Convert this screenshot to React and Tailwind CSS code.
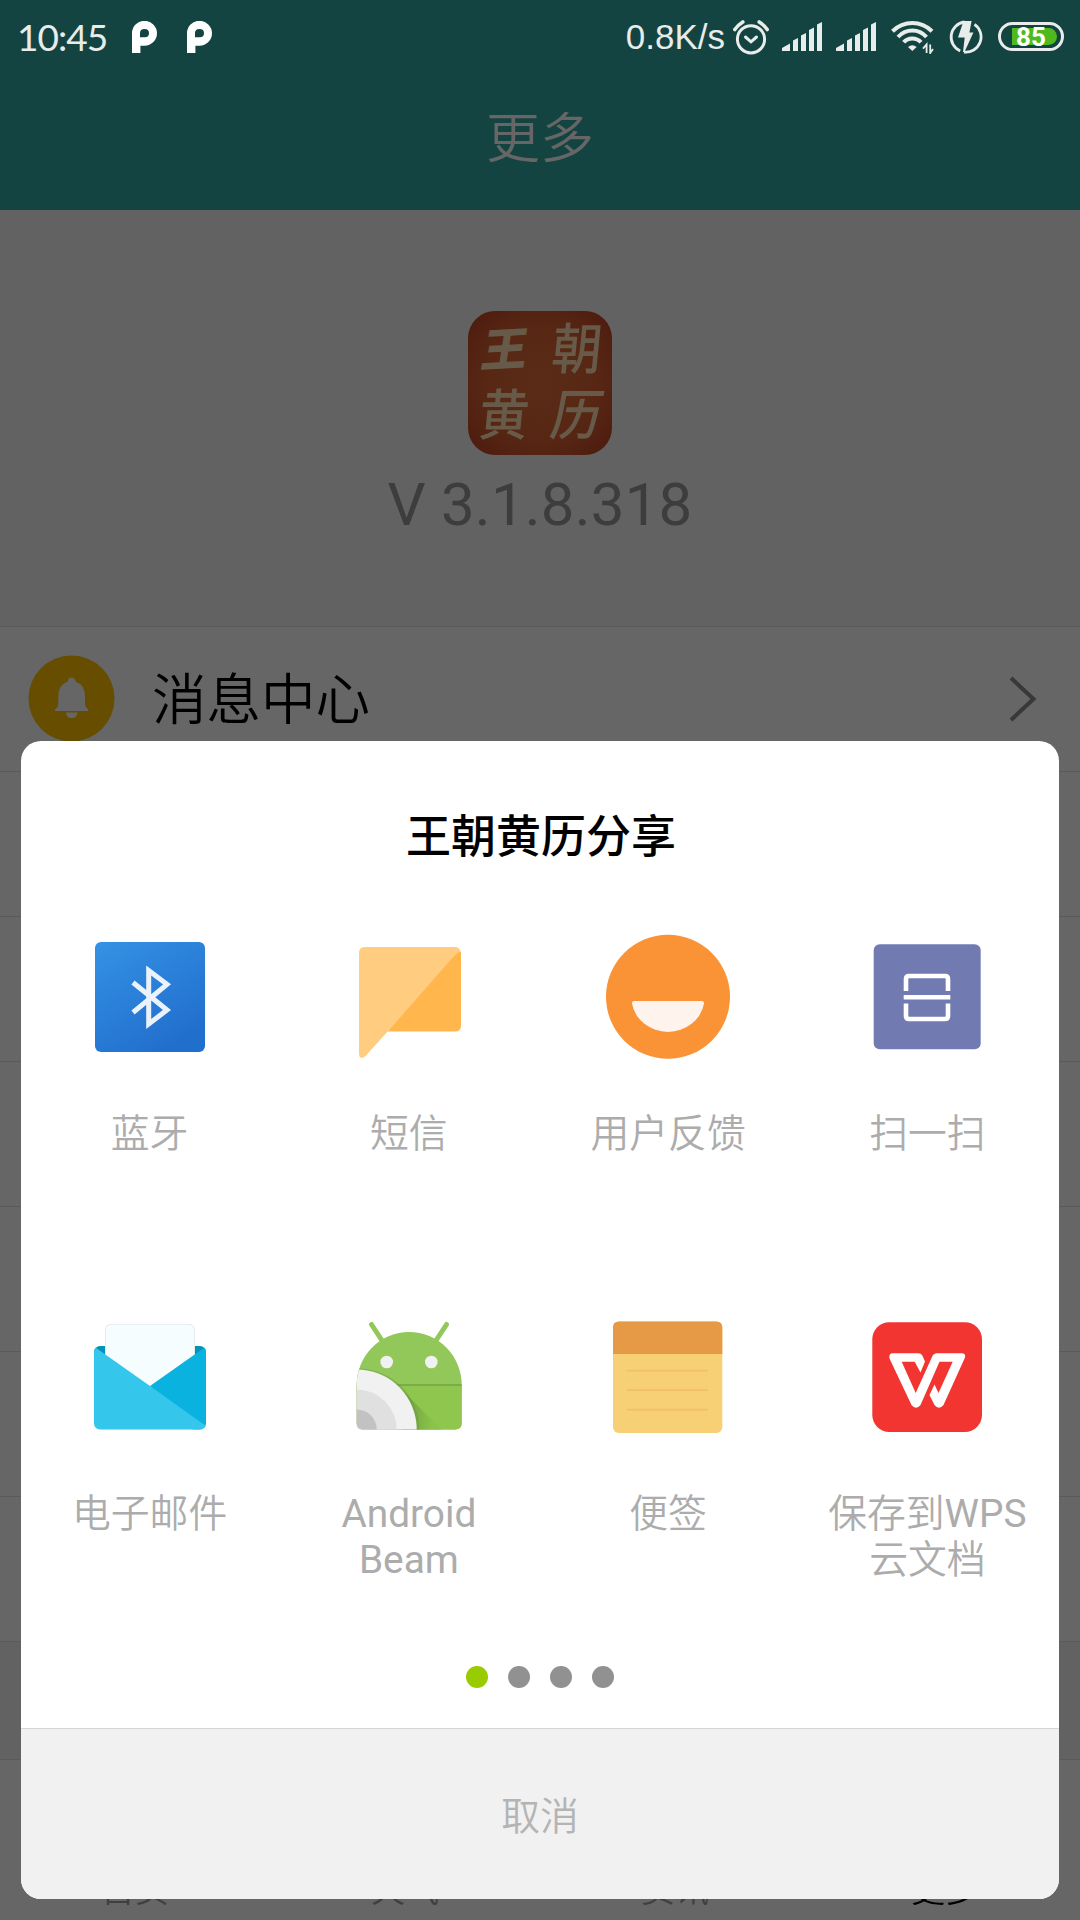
import React from "react";

function PinIcon() {
  return (
    <svg className="h-8 w-[25px]" viewBox="0 0 25 32" fill="#fff">
      <path
        fillRule="evenodd"
        d="M0 32V12.5A12.5 12.5 0 1 1 12.5 24.8H8.4V32ZM8 16.2V12Q8 8 12.5 8T17 12.2T12.5 16.2Z"
      />
    </svg>
  );
}

function AlarmIcon() {
  return (
    <svg className="h-9 w-9" viewBox="0 0 36 36" fill="none" stroke="#e8eceb" strokeWidth="3">
      <circle cx="18" cy="20.3" r="13.6" />
      <path d="M12.5 18l5.5 4.8 5.5-4.8" strokeLinecap="round" />
      <path d="M1.8 10.5Q5 6 9.8 3M34.2 10.5Q31 6 26.2 3" strokeWidth="3.6" strokeLinecap="round" />
    </svg>
  );
}

function SignalIcon() {
  return (
    <svg className="h-[29px] w-10" viewBox="0 0 40 29" fill="#e8eceb">
      <path d="M0 29V26L8 21.5V29ZM11 29V18.5L16 16V29ZM19 29V13.5L24 11V29ZM27 29V8L32 5.5V29ZM35 29V2.5L40 0V29Z" />
    </svg>
  );
}

function WifiIcon() {
  return (
    <svg className="h-[34px] w-[43px]" viewBox="0 0 43 34" fill="none" stroke="#e8eceb" strokeWidth="4">
      <path d="M1.5 11.2Q10 3 21.3 3T41 11.2" />
      <path d="M7 17Q13 10.6 21.3 10.6T35.5 17" />
      <path d="M12.7 22.3Q16 18.4 21.3 18.4T30 22.3" />
      <path d="M17 27Q21.3 23.5 25.7 27L21.3 31Z" fill="#e8eceb" stroke="none" />
      <path d="M35.6 33V24.5L32 28.6M39.2 24.5V33L42 29" strokeWidth="1.8" />
    </svg>
  );
}

function ChargeIcon() {
  return (
    <svg className="h-[34px] w-[34px]" viewBox="0 0 34 34" fill="none" stroke="#e8eceb" strokeWidth="2.8">
      <path d="M15.5 2A15.2 15.2 0 0 0 11.2 31" />
      <path d="M25.5 4.4A15.2 15.2 0 0 1 15 32" />
      <path d="M14.5 1H22.6L20.4 12.4H24.4L15.5 32H14L15.7 17.5H9Z" fill="#e8eceb" stroke="none" />
    </svg>
  );
}

function Battery() {
  return (
    <div className="flex h-[29px] w-[66px] items-center rounded-full border-[3px] border-[#e8eceb] pl-[11px]">
      <div className="flex h-[17px] w-[45px] items-center justify-center rounded-r-full bg-[#4fba1d] pr-[7px] font-['Roboto',sans-serif] text-[26px] leading-none font-bold text-white">
        85
      </div>
    </div>
  );
}

function StatusBar() {
  return (
    <div className="flex h-[73px] items-center justify-between pr-[16px] pl-[17px]">
      <div className="flex items-center">
        <span className="w-[115px] font-['Lato',sans-serif] text-[37px] leading-none tracking-[-1px] text-[#e8eceb]">10:45</span>
        <div className="flex gap-[30px]">
          <PinIcon />
          <PinIcon />
        </div>
      </div>
      <div className="flex items-center">
        <span className="mr-[8px] font-['Liberation_Sans',sans-serif] text-[35px] leading-none text-[#e8eceb]">0.8K/s</span>
        <AlarmIcon />
        <div className="mr-[15px] ml-[13px] flex gap-[14px]">
          <SignalIcon />
          <SignalIcon />
        </div>
        <WifiIcon />
        <div className="mr-[15px] ml-[15px]">
          <ChargeIcon />
        </div>
        <Battery />
      </div>
    </div>
  );
}

function AppLogo() {
  return (
    <div className="grid h-36 w-36 grid-cols-2 grid-rows-2 place-items-center rounded-[27px] bg-[radial-gradient(circle,#5a2c17_0%,#572714_55%,#4d1a0e_100%)] p-[6px] text-[50px] leading-none text-[#685a49]">
      <span className="-rotate-3 -skew-x-12 pr-[4px] text-[46px] font-black">王</span>
      <span className="-skew-x-6 scale-y-110 pl-[8px] font-medium">朝</span>
      <span className="-skew-x-6 scale-y-110 pr-[6px] font-medium">黄</span>
      <span className="-skew-x-12 scale-y-110 pl-[8px] font-medium">历</span>
    </div>
  );
}

function BellBadge() {
  return (
    <svg className="h-[87px] w-[87px]" viewBox="0 0 87 87">
      <circle cx="43.5" cy="43.5" r="43" fill="#664d00" />
      <path
        fill="#666"
        d="M43.5 22.5Q47 22.5 47.5 26.5Q57 30 57 41V48Q57 52 60.3 54.5V56H27V54.5Q30.3 52 30.3 48V41Q30.3 30 39.7 26.5Q40.3 22.5 43.5 22.5ZM38 57.5H49.5Q49 63 43.7 63T38 57.5Z"
      />
    </svg>
  );
}

function BluetoothArt() {
  return (
    <>
      <defs>
        <linearGradient id="bt" x1="0" y1="0" x2=".6" y2="1">
          <stop offset="0" stopColor="#3592e4" />
          <stop offset="1" stopColor="#216fcd" />
        </linearGradient>
      </defs>
      <rect x="11" y="11" width="110" height="110" rx="6" fill="url(#bt)" />
      <path
        d="M49 51.5L83 79L64.7 93V39.5L83 53.3L49 81.5"
        fill="none"
        stroke="#eaf3fc"
        strokeWidth="5"
        strokeLinejoin="miter"
      />
    </>
  );
}

function MessageArt() {
  return (
    <>
      <path d="M44.7 100.6H112Q118 100.6 118 94.6V21L112 18Z" fill="#ffb74d" />
      <path d="M22 16H112Q116.5 16 117.5 20.5Q115 21 111 25L44.7 100.6L22.5 125Q16 130 16 122V22Q16 16 22 16Z" fill="#ffcc80" />
    </>
  );
}

function FeedbackArt() {
  return (
    <>
      <circle cx="66" cy="65.8" r="62" fill="#fa9336" />
      <path d="M32 70H100Q102.3 70 102 72.5A36.500 34 0 0 1 30 72.5Q29.7 70 32 70Z" fill="#fff3ee" />
    </>
  );
}

function ScanArt() {
  return (
    <>
      <rect x="12.7" y="13.3" width="107" height="105" rx="6" fill="#717bb1" />
      <path
        d="M45 60V48Q45 45 48 45H84Q87 45 87 48V60M42.7 66.3H89.3M45 72.5V85Q45 88 48 88H84Q87 88 87 85V72.5"
        fill="none"
        stroke="#fff"
        strokeWidth="4.6"
      />
    </>
  );
}

function MailArt() {
  return (
    <>
      <defs>
        <clipPath id="envelope">
          <rect x="10" y="35" width="112" height="83.5" rx="6" />
        </clipPath>
      </defs>
      <rect x="10" y="35" width="112" height="60" rx="6" fill="#0094bd" />
      <path d="M21.5 95V19.5Q21.5 13.3 27.7 13.3H104.3Q110.5 13.3 110.5 19.5V95Z" fill="#f5fdff" stroke="#e6ebee" />
      <g clipPath="url(#envelope)">
        <path d="M122 35.5L66 75L110 120H122Z" fill="#0ab2df" />
        <path d="M10 35.5L66 75L122 115V120H10Z" fill="#35c6ec" />
      </g>
    </>
  );
}

function AndroidArt() {
  return (
    <>
      <defs>
        <clipPath id="robot">
          <path d="M13.7 74A52.500 53 0 0 1 118.7 74V112Q118.7 118.5 112 118.5H20Q13.7 118.5 13.7 112Z" />
        </clipPath>
        <linearGradient id="robotShade" x1="0" y1="0" x2="1" y2="0">
          <stop offset="0" stopColor="#6e9c41" />
          <stop offset=".75" stopColor="#8bc34a" />
        </linearGradient>
      </defs>
      <path d="M28.5 13.5L40 31M103.5 13.5L92 31" stroke="#92c859" strokeWidth="5" strokeLinecap="round" />
      <g clipPath="url(#robot)">
        <rect x="10" y="18" width="112" height="104" fill="#92c859" />
        <rect x="10" y="74.5" width="112" height="48" fill="#8fc74e" />
        <path d="M58 78L100 120H60Z" fill="url(#robotShade)" />
        <path d="M50 74H120" stroke="#7bab4a" strokeWidth="1.8" />
        <circle cx="15" cy="119" r="61.5" fill="#6e9c41" opacity=".5" />
        <circle cx="13.7" cy="118.5" r="60" fill="#f1f1f1" />
        <circle cx="13.7" cy="118.5" r="40" fill="#e0e0e0" />
        <circle cx="13.7" cy="118.5" r="20" fill="#c2c2c2" />
      </g>
      <circle cx="43.7" cy="51" r="6.3" fill="#f1f1f1" />
      <circle cx="88.3" cy="51" r="6.3" fill="#f1f1f1" />
    </>
  );
}

function NotesArt() {
  return (
    <>
      <rect x="11" y="10.5" width="109.3" height="111.5" rx="6" fill="#f7cf74" />
      <path d="M11 43V16.5Q11 10.5 17 10.5H114.3Q120.3 10.5 120.3 16.5V43Z" fill="#e79a45" />
      <path d="M25 59.7H105.7M25 79.2H105.7M25 98.7H105.7" stroke="#f1bf68" strokeWidth="1.8" />
    </>
  );
}

function WpsArt() {
  return (
    <>
      <rect x="11.3" y="11.3" width="109.7" height="109.7" rx="17" fill="#f33531" />
      {/* left stroke with its hook, then the right stroke ending in a short return */}
      <path
        fill="#fff"
        fillRule="evenodd"
        d="M32 42.3H57.5Q60 42.300 61.200 44.300L64 50.500L59.500 61.500L53.700 50.700H40.700L54.700 82L71 46Q72.500 42.300 76 42.300H100.500Q105 42.300 104 46.500L82.500 94Q78 99.500 73.500 94L68.500 84L73.500 73.500L77.500 82L91.700 50.700H78.500L59.500 94Q55 99.500 50.500 94L28.500 47.500Q27.500 42.300 32 42.300Z"
      />
    </>
  );
}

const targets = [
  { label: ["蓝牙"], Art: BluetoothArt },
  { label: ["短信"], Art: MessageArt },
  { label: ["用户反馈"], Art: FeedbackArt },
  { label: ["扫一扫"], Art: ScanArt },
  { label: ["电子邮件"], Art: MailArt },
  { label: ["Android", "Beam"], Art: AndroidArt },
  { label: ["便签"], Art: NotesArt },
  { label: ["保存到WPS", "云文档"], Art: WpsArt },
];

// Latin letters are set one step heavier than the Chinese characters.
function MixedText({ text }) {
  return text.split(/([A-Za-z]+)/).map((part, i) =>
    i % 2 ? (
      <span key={i} className="font-[380]">
        {part}
      </span>
    ) : (
      part
    )
  );
}

function ShareSheet() {
  return (
    <div className="absolute top-[741px] left-[21px] flex h-[1158px] w-[1038px] flex-col overflow-hidden rounded-[20px] bg-white">
      <h2 className="pt-[64px] pl-[2px] text-center text-[45px] leading-[66px] font-medium text-black">王朝黄历分享</h2>
      <div className="mt-[60px] -ml-px grid w-[1037px] grid-cols-4">
        {targets.map(({ label, Art }) => (
          <div key={label[0]} className="flex h-[380px] flex-col items-center">
            <svg className="h-[132px] w-[132px]" viewBox="0 0 132 132">
              <Art />
            </svg>
            <div className="mt-[48px] text-center text-[38.8px] leading-[46px] font-[350] whitespace-nowrap text-[#acacac]">
              {label.map((line) => (
                <div key={line}>
                  <MixedText text={line} />
                </div>
              ))}
            </div>
          </div>
        ))}
      </div>
      <div className="-mt-[25px] flex flex-1 justify-center gap-5">
        <span className="h-[22px] w-[22px] rounded-full bg-[#99cc00]" />
        <span className="h-[22px] w-[22px] rounded-full bg-[#919191]" />
        <span className="h-[22px] w-[22px] rounded-full bg-[#919191]" />
        <span className="h-[22px] w-[22px] rounded-full bg-[#919191]" />
      </div>
      <div className="flex h-[171px] items-center justify-center border-t border-[#d6d6d6] bg-[#f1f1f1] pt-[6px] text-[38.8px] font-[350] text-[#b4b4b4]">
        取消
      </div>
    </div>
  );
}

export default function App() {
  return (
    <div className="relative flex h-[1920px] w-[1080px] flex-col overflow-hidden bg-[#666666] font-['Roboto','Noto_Sans_CJK_SC',sans-serif]">
      <header className="flex h-[210px] flex-col bg-[#144441]">
        <StatusBar />
        <h1 className="pt-[27px] text-center text-[54px] leading-[80px] font-[350] text-[#666666]">更多</h1>
      </header>
      <section className="flex h-[416px] flex-col items-center bg-[#626262] pt-[101px]">
        <AppLogo />
        <p className="mt-[14px] text-[60px] leading-[72px] tracking-[0.2px] text-[#3d3d3d]">V 3.1.8.318</p>
      </section>
      <div className="flex h-[145px] items-center border-t border-[#5a5a5a] pr-[43px] pb-px pl-[28px]">
        <BellBadge />
        <span className="ml-[37px] flex-1 pt-[4px] text-[54.5px] leading-none font-[350] text-black">消息中心</span>
        <svg className="h-[46px] w-[28px]" viewBox="0 0 28 46" fill="none" stroke="#383838" strokeWidth="4">
          <path d="M2 2L24.5 23L2 44" />
        </svg>
      </div>
      <div className="h-[145px] border-t border-[#5a5a5a]" />
      <div className="h-[145px] border-t border-[#5a5a5a]" />
      <div className="h-[145px] border-t border-[#5a5a5a]" />
      <div className="h-[145px] border-t border-[#5a5a5a]" />
      <div className="h-[145px] border-t border-[#5a5a5a]" />
      <div className="h-[145px] border-t border-[#5a5a5a]" />
      <div className="h-[118px] border-t border-[#5a5a5a] bg-[#626262]" />
      <nav className="grid flex-1 grid-cols-4 items-end border-t border-[#5a5a5a] pb-[13px] text-center text-[34px] leading-[34px] font-[350] text-[#404040]">
        <span>首页</span>
        <span>天气</span>
        <span>资讯</span>
        <span className="text-black">更多</span>
      </nav>
      <ShareSheet />
    </div>
  );
}
